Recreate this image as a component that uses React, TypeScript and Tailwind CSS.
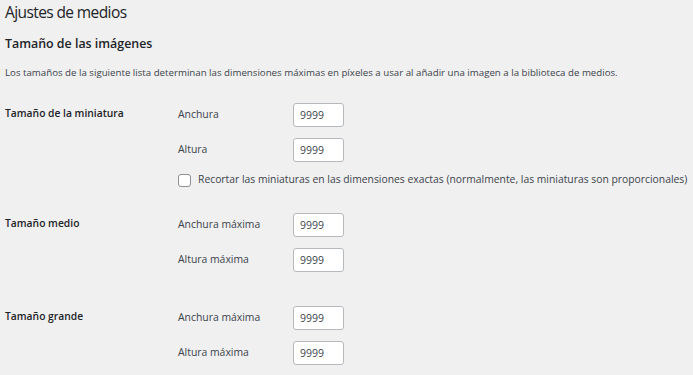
const font = { fontFamily: '"Open Sans", "Noto Sans", sans-serif' };

function Field({ label }: { label: string }) {
  return (
    <div className="flex h-[24px] items-center">
      <span className="w-[115px] shrink-0 text-[10.4px] text-[#3c434a]">{label}</span>
      <input
        defaultValue="9999"
        className="h-[24px] w-[51px] rounded-[3px] border border-[#b5b9bd] bg-white px-[6px] text-[10.5px] text-[#3c434a] outline-none"
      />
    </div>
  );
}

function Section({ title, fields, children, className = "" }: { title: string; fields: string[]; children?: React.ReactNode; className?: string }) {
  return (
    <div className={"flex " + className}>
      <div className="w-[173px] shrink-0 pt-[3px] text-[10.3px] leading-[14px] font-semibold text-[#1d2327]">{title}</div>
      <div className="flex flex-col gap-[11px]">
        {fields.map((f) => (
          <Field key={f} label={f} />
        ))}
        {children}
      </div>
    </div>
  );
}

export default function App() {
  return (
    <div className="h-[375px] w-[693px] overflow-hidden bg-[#f0f0f1] pl-[5px]" style={font}>
      <h1 className="pt-[2px] text-[15.5px] leading-[20px] tracking-[-0.6px] font-normal text-[#1d2327]">Ajustes de medios</h1>
      <h2 className="mt-[13px] text-[12.4px] leading-[18px] font-semibold text-[#1d2327]">Tamaño de las imágenes</h2>
      <p className="mt-[13px] text-[9.7px] leading-[14px] text-[#3c434a]">
        Los tamaños de la siguiente lista determinan las dimensiones máximas en píxeles a usar al añadir una imagen a la biblioteca de medios.
      </p>

      <Section title="Tamaño de la miniatura" fields={["Anchura", "Altura"]} className="mt-[23px]">
        <label className="flex h-[14px] items-center gap-[7px] whitespace-nowrap text-[10.35px] text-[#3c434a]">
          <span className="h-[13px] w-[13px] shrink-0 rounded-[3px] border border-[#8c8f94] bg-white" />
          Recortar las miniaturas en las dimensiones exactas (normalmente, las miniaturas son proporcionales)
        </label>
      </Section>

      <Section title="Tamaño medio" fields={["Anchura máxima", "Altura máxima"]} className="mt-[26px]" />
      <Section title="Tamaño grande" fields={["Anchura máxima", "Altura máxima"]} className="mt-[34px]" />
    </div>
  );
}
